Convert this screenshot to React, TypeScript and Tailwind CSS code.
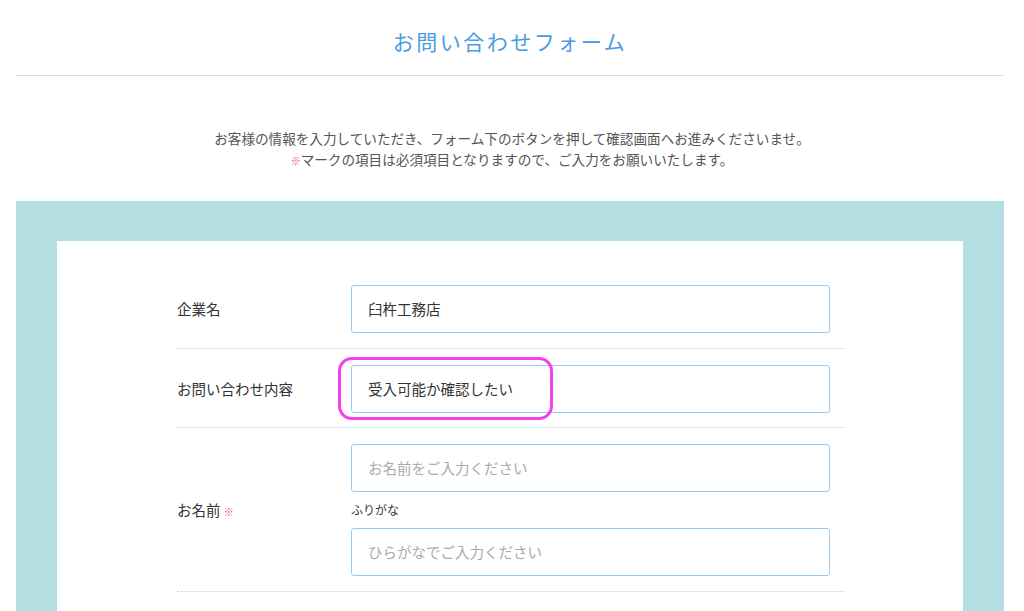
export default function App() {
  const f = { fontFamily: '"Noto Sans CJK JP", "Noto Sans", sans-serif' };
  const input = "w-[479px] h-[48px] border border-[#9ccbef] rounded-[3px] px-4 flex items-center text-[14.5px]";
  return (
    <div style={f} className="w-[1024px] h-[611px] overflow-hidden bg-white text-[#333]">
      <div className="ml-4 mr-5 h-[76px] border-b border-[#dddddd] flex items-center justify-center pt-[8px]">
        <h1 className="text-[21px] tracking-[0.12em] text-[#4a9be3]">お問い合わせフォーム</h1>
      </div>
      <div className="h-[125px] flex flex-col items-center pt-[52px] text-[13.6px] leading-[21px] text-[#555]">
        <p>お客様の情報を入力していただき、フォーム下のボタンを押して確認画面へお進みくださいませ。</p>
        <p><span className="text-[#e05555] text-[10px]">※</span>マークの項目は必須項目となりますので、ご入力をお願いいたします。</p>
      </div>
      <div className="ml-4 mr-5 bg-[#b3dfe3] pt-[40px] px-[41px] h-[500px]">
        <div className="bg-white h-[460px] pt-[45px] pl-[120px]">
          <div className="w-[668px]">
            <div className="flex items-center h-[63px] border-b border-dotted border-[#b8d6ef]">
              <div className="w-[174px] text-[14.5px] -mt-[16px]">企業名</div>
              <div className={input + " -mt-[16px]"}>臼杵工務店</div>
            </div>
            <div className="flex items-start h-[79px] pt-[16px] border-b border-dotted border-[#b8d6ef]">
              <div className="w-[174px] text-[14.5px] h-[48px] flex items-center">お問い合わせ内容</div>
              <div className="relative">
                <div className={input}>受入可能か確認したい</div>
                <div className="absolute left-[-13px] top-[-8px] w-[215px] h-[63px] rounded-[14px] border-[3px] border-[#f53ff0]" />
              </div>
            </div>
            <div className="flex items-center h-[164px] border-b border-dotted border-[#b8d6ef]">
              <div className="w-[174px] text-[14.5px]">お名前 <span className="text-[#e05555] text-[10px]">※</span></div>
              <div className="flex flex-col">
                <div className={input + " text-[#aaa]"}>お名前をご入力ください</div>
                <div className="text-[12px] h-[36px] flex items-center">ふりがな</div>
                <div className={input + " text-[#aaa]"}>ひらがなでご入力ください</div>
              </div>
            </div>
          </div>
        </div>
      </div>
    </div>
  );
}
